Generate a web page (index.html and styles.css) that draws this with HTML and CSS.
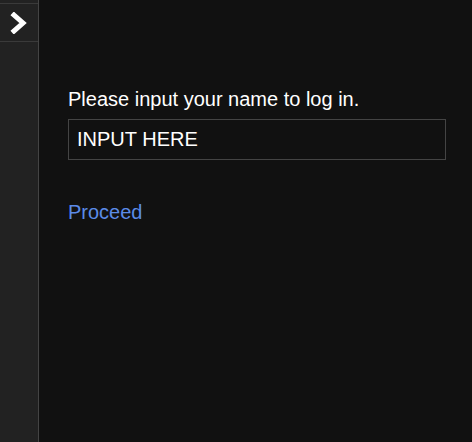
FILE: index.html
```html
<!DOCTYPE html>
<html>
<head>
<meta charset="utf-8">
<link rel="stylesheet" href="styles.css">
</head>
<body>
<div class="app">
  <aside class="sidebar">
    <button class="toggle" aria-label="Open">
      <svg width="18" height="22" viewBox="0 0 18 22"><path d="M4 3 L13 11 L4 19" fill="none" stroke="#fff" stroke-width="5" stroke-linejoin="miter" stroke-linecap="square"/></svg>
    </button>
  </aside>
  <main class="main">
    <label class="prompt" for="name">Please input your name to log in.</label>
    <input id="name" class="name-input" type="text" value="INPUT HERE">
    <a class="proceed" href="#">Proceed</a>
  </main>
</div>
</body>
</html>
```
FILE: styles.css
```css
html, body {
  margin: 0;
  padding: 0;
  height: 100%;
  background: #111111;
  font-family: "Liberation Sans", Arial, sans-serif;
}
.app {
  display: flex;
  height: 100%;
}
.sidebar {
  width: 38px;
  background: #222222;
  border-right: 1px solid #444444;
  flex: none;
}
.toggle {
  display: flex;
  align-items: center;
  justify-content: center;
  width: 38px;
  height: 39px;
  margin-top: 3px;
  padding: 0;
  background: #222222;
  border: none;
  border-top: 1px solid #3a3a3a;
  border-bottom: 1px solid #3a3a3a;
  box-sizing: border-box;
}
.main {
  flex: 1;
  padding: 88px 26px 0 29px;
  display: flex;
  flex-direction: column;
}
.prompt {
  color: #ffffff;
  font-size: 20px;
  line-height: 23px;
  margin-bottom: 8px;
}
.name-input {
  box-sizing: border-box;
  width: 100%;
  height: 41px;
  background: #111111;
  border: 1px solid #444444;
  color: #ffffff;
  font-family: "Liberation Sans", Arial, sans-serif;
  font-size: 20px;
  padding: 0 8px;
  margin: 0;
  outline: none;
}
.proceed {
  align-self: flex-start;
  margin-top: 41px;
  color: #5b8be8;
  font-size: 20px;
  line-height: 23px;
  text-decoration: none;
}
```
